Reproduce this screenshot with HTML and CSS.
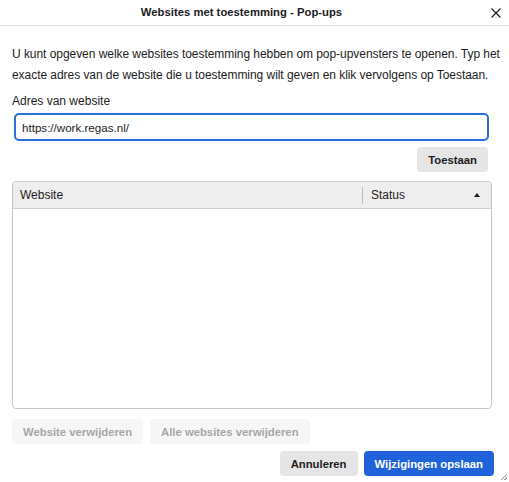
FILE: index.html
```html
<!DOCTYPE html>
<html lang="nl">
<head>
<meta charset="utf-8">
<title>Websites met toestemming - Pop-ups</title>
<link rel="stylesheet" href="styles.css">
</head>
<body>
<div class="dialog">
  <header class="titlebar">
    <h1 class="title">Websites met toestemming - Pop-ups</h1>
    <button class="close" aria-label="Sluiten">
      <svg width="10" height="10" viewBox="0 0 10 10"><path d="M0.5 0.5 L9.5 9.5 M9.5 0.5 L0.5 9.5" stroke="#1c1c1c" stroke-width="1.2" fill="none"/></svg>
    </button>
  </header>
  <main class="content">
    <p class="intro">U kunt opgeven welke websites toestemming hebben om pop-upvensters te openen. Typ het exacte adres van de website die u toestemming wilt geven en klik vervolgens op Toestaan.</p>
    <label class="label" for="url">Adres van website</label>
    <input class="url" id="url" type="text" value="https://work.regas.nl/">
    <div class="allow-row">
      <button class="btn">Toestaan</button>
    </div>
    <div class="table">
      <div class="thead">
        <div class="th th-site">Website</div>
        <div class="th th-status"><span>Status</span><span class="sort"></span></div>
      </div>
      <div class="tbody"></div>
    </div>
    <div class="remove-row">
      <button class="btn disabled">Website verwijderen</button>
      <button class="btn disabled">Alle websites verwijderen</button>
    </div>
    <div class="footer">
      <button class="btn">Annuleren</button>
      <button class="btn primary">Wijzigingen opslaan</button>
    </div>
  </main>
  <span class="grip"></span>
</div>
</body>
</html>
```
FILE: styles.css
```css
* { box-sizing: border-box; }
html, body { margin: 0; padding: 0; background: #fff; }
body {
  font-family: "Liberation Sans", Arial, sans-serif;
  font-size: 12px;
  color: #1c1c1e;
}
.dialog { position: relative; width: 509px; height: 482px; }
.titlebar {
  display: flex;
  align-items: center;
  height: 26px;
  border-bottom: 1px solid #e3e3e3;
}
.title {
  flex: 1;
  margin: 0;
  text-align: center;
  font-size: 11.3px;
  font-weight: 700;
  line-height: 25px;
}
.close {
  width: 26px;
  height: 25px;
  border: 0;
  background: none;
  padding: 0;
  display: flex;
  align-items: center;
  justify-content: center;
}
.content { padding: 18px 8px 0 12px; display: flex; flex-direction: column; }
.intro { margin: 0 -8px 0 0; line-height: 21px; letter-spacing: -0.05px; }
.label { margin-top: 4px; line-height: 22px; }
.url {
  margin: 1px 0 0 2px;
  height: 28px;
  width: 475px;
  border: 2px solid #2a6fdb;
  border-radius: 5px;
  padding: 0 6px;
  font: inherit;
  font-size: 11.6px;
  color: #1c1c1e;
  outline: none;
}
.allow-row { display: flex; justify-content: flex-end; margin-top: 6px; padding-right: 13px; }
.btn {
  font: inherit;
  font-size: 11.3px;
  font-weight: 700;
  height: 25px;
  padding: 0 11px;
  border: 0;
  border-radius: 4px;
  background: #e5e5e5;
  color: #1c1c1e;
}
.table {
  margin-top: 9px;
  width: 480px;
  height: 228px;
  border: 1px solid #c4c4c4;
  border-radius: 4px;
  display: flex;
  flex-direction: column;
  overflow: hidden;
}
.thead {
  display: flex;
  height: 27px;
  background: #eeeeee;
  border-bottom: 1px solid #cfcfcf;
  align-items: center;
}
.th { line-height: 26px; }
.th-site { flex: 1; padding-left: 7px; }
.th-status {
  width: 129px;
  display: flex;
  justify-content: space-between;
  align-items: center;
  padding: 0 11px 0 8px;
  border-left: 1px solid #bdbdbd;
  line-height: 17px;
}
.sort {
  width: 0; height: 0;
  border-left: 3.5px solid transparent;
  border-right: 3.5px solid transparent;
  border-bottom: 4px solid #1c1c1e;
}
.tbody { flex: 1; }
.remove-row { display: flex; gap: 7px; margin-top: 10px; }
.btn.disabled { background: #f6f6f6; color: #a6a6a6; }
.footer { display: flex; justify-content: flex-end; gap: 6px; margin-top: 7px; margin-right: 7px; }
.btn.primary { background: #2062d9; color: #fff; }
.grip {
  position: absolute;
  right: 2px;
  bottom: 2px;
  width: 6px;
  height: 6px;
  background: linear-gradient(135deg, transparent 45%, #9a9a9a 45%, #9a9a9a 55%, transparent 55%, transparent 75%, #9a9a9a 75%, #9a9a9a 85%, transparent 85%);
}
```
